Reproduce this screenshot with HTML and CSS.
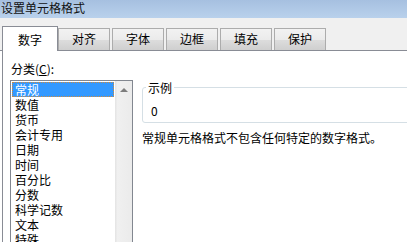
FILE: index.html
```html
<!DOCTYPE html>
<html lang="zh-CN">
<head>
    <meta charset="UTF-8">
    <title>设置单元格格式</title>
    <link rel="stylesheet" href="styles.css">
</head>
<body>
    <div class="titlebar">设置单元格格式</div>

    <!-- Tabs -->
    <div class="tabstrip">
        <div class="tab tab-active">数字</div>
        <div class="tab">对齐</div>
        <div class="tab">字体</div>
        <div class="tab">边框</div>
        <div class="tab">填充</div>
        <div class="tab">保护</div>
    </div>

    <div class="panel">
        <div class="category-col">
            <div class="field-label">分类(<u>C</u>):</div>
            <div class="listbox">
                <ul class="list-items">
                    <li class="selected">常规</li>
                    <li>数值</li>
                    <li>货币</li>
                    <li>会计专用</li>
                    <li>日期</li>
                    <li>时间</li>
                    <li>百分比</li>
                    <li>分数</li>
                    <li>科学记数</li>
                    <li>文本</li>
                    <li>特殊</li>
                </ul>
                <div class="scrollbar">
                    <span class="arrow-up"></span>
                </div>
            </div>
        </div>

        <div class="detail-col">
            <fieldset class="sample">
                <legend>示例</legend>
                <div class="sample-value">0</div>
            </fieldset>
            <p class="description">常规单元格格式不包含任何特定的数字格式。</p>
        </div>
    </div>
</body>
</html>
```

FILE: styles.css
```css
/* General */
body {
    margin: 0;
    width: 407px;
    height: 242px;
    overflow: hidden;
    background: #fff;
    color: #000;
    font-family: "Noto Sans CJK SC", "Microsoft YaHei", sans-serif;
    font-size: 12px;
    line-height: 15px;
}

/* Title bar */
.titlebar {
    height: 18px;
    line-height: 15px;
    padding-left: 1px;
    background: linear-gradient(to bottom, #a6c0e0, #b9d1ec);
    color: #111;
}

/* Tabs */
.tabstrip {
    display: flex;
    align-items: flex-end;
    height: 32px;
    padding-left: 2px;
    background: #f0f0f0;
    border-bottom: 1px solid #898c95;
}

.tab {
    box-sizing: border-box;
    width: 52px;
    height: 22px;
    margin-right: 2px;
    text-align: center;
    line-height: 20px;
    border: 1px solid #acacac;
    border-bottom: none;
    background: linear-gradient(to bottom, #f2f2f2 0%, #ebebeb 50%, #dddddd 51%, #cfcfcf 100%);
}

.tab-active {
    width: 56px;
    height: 25px;
    margin-bottom: -1px;
    margin-right: 0;
    line-height: 25px;
    border-color: #898c95;
    background: #fff;
}

/* Panel */
.panel {
    display: flex;
    align-items: flex-start;
    gap: 9px;
    height: 191px;
    margin-left: 2px;
    padding-left: 7px;
    border-left: 1px solid #898c95;
}

.field-label {
    margin-top: 10px;
    margin-bottom: 4px;
    padding-left: 1px;
}

/* Category list */
.listbox {
    display: flex;
    width: 121px;
    height: 175px;
    border: 1px solid #828790;
    overflow: hidden;
}

.list-items {
    list-style: none;
    margin: 0;
    padding: 1px;
    width: 103px;
}

.list-items li {
    height: 15px;
    padding-left: 3px;
    white-space: nowrap;
}

.list-items .selected {
    background: #3399ff;
    color: #fff;
    outline: 1px dotted #d08a3c;
    outline-offset: -1px;
}

.scrollbar {
    width: 17px;
    background: linear-gradient(to right, #e3e3e3, #f0f0f0 15%, #ebebeb);
    display: flex;
    justify-content: center;
    padding-top: 7px;
    box-sizing: border-box;
}

.arrow-up {
    width: 0;
    height: 0;
    border-left: 4px solid transparent;
    border-right: 4px solid transparent;
    border-bottom: 4px solid #7d7d7d;
}

/* Sample + description */
.detail-col {
    flex: 0 0 300px;
    padding-top: 29px;
}

.sample {
    margin: 0;
    padding: 8px 8px 4px;
    border: 1px solid #d5dfe5;
    border-radius: 3px;
}

.sample legend {
    margin-left: -5px;
    padding: 0 2px;
}

.description {
    margin: 7px 0 0;
}
```
